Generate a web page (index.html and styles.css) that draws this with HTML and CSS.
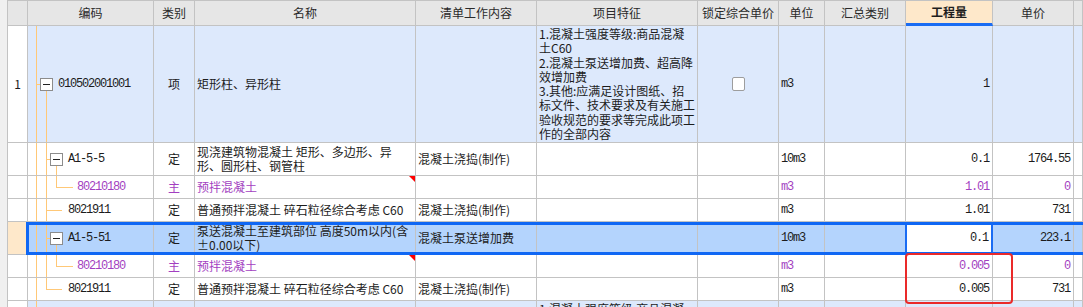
FILE: index.html
```html
<!DOCTYPE html>
<html lang="zh">
<head>
<meta charset="utf-8">
<title>清单</title>
<link rel="stylesheet" href="styles.css">
</head>
<body>
<div class="page">
  <div class="table">
    <div class="row head">
      <div class="c"></div>
      <div class="c ctr">编码</div>
      <div class="c ctr">类别</div>
      <div class="c ctr">名称</div>
      <div class="c ctr">清单工作内容</div>
      <div class="c ctr">项目特征</div>
      <div class="c ctr">锁定综合单价</div>
      <div class="c ctr">单位</div>
      <div class="c ctr">汇总类别</div>
      <div class="c ctr qty-head">工程量</div>
      <div class="c ctr">单价</div>
      <div class="c"></div>
    </div>

    <div class="row blue h117">
      <div class="c ctr rn">1</div>
      <div class="c code">
        <span class="ln v1"></span><span class="ln h hroot"></span><span class="ln v2 from-box"></span>
        <span class="box lv1"></span><span class="mono">010502001001</span>
      </div>
      <div class="c ctr">项</div>
      <div class="c">矩形柱、异形柱</div>
      <div class="c"></div>
      <div class="c feat">1.混凝土强度等级:商品混凝<br>土C60<br>2.混凝土泵送增加费、超高降<br>效增加费<br>3.其他:应满足设计图纸、招<br>标文件、技术要求及有关施工<br>验收规范的要求等完成此项工<br>作的全部内容</div>
      <div class="c ctr"><span class="chk"></span></div>
      <div class="c"><span class="mono">m3</span></div>
      <div class="c"></div>
      <div class="c num"><span class="mono">1</span></div>
      <div class="c"></div>
      <div class="c"></div>
    </div>

    <div class="row h33">
      <div class="c rn"></div>
      <div class="c code">
        <span class="ln v1"></span><span class="ln v2"></span><span class="ln h h2box"></span><span class="ln v3 from-box"></span>
        <span class="box lv2"></span><span class="mono">A1-5-5</span>
      </div>
      <div class="c ctr">定</div>
      <div class="c wrap">现浇建筑物混凝土 矩形、多边形、异<br>形、圆形柱、钢管柱</div>
      <div class="c">混凝土浇捣(制作)</div>
      <div class="c"></div>
      <div class="c"></div>
      <div class="c"><span class="mono">10m3</span></div>
      <div class="c"></div>
      <div class="c num"><span class="mono">0.1</span></div>
      <div class="c num"><span class="mono">1764.55</span></div>
      <div class="c"></div>
    </div>

    <div class="row h23 purple">
      <div class="c rn"></div>
      <div class="c code">
        <span class="ln v1"></span><span class="ln v2"></span><span class="ln v3 to-mid"></span><span class="ln h h3leaf"></span>
        <span class="mono lv3t">80210180</span>
      </div>
      <div class="c ctr">主</div>
      <div class="c flag">预拌混凝土</div>
      <div class="c"></div>
      <div class="c"></div>
      <div class="c"></div>
      <div class="c"><span class="mono">m3</span></div>
      <div class="c"></div>
      <div class="c num"><span class="mono">1.01</span></div>
      <div class="c num"><span class="mono">0</span></div>
      <div class="c"></div>
    </div>

    <div class="row h23">
      <div class="c rn"></div>
      <div class="c code">
        <span class="ln v1"></span><span class="ln v2"></span><span class="ln h h2leaf"></span>
        <span class="mono lv2t">8021911</span>
      </div>
      <div class="c ctr">定</div>
      <div class="c">普通预拌混凝土 碎石粒径综合考虑 C60</div>
      <div class="c">混凝土浇捣(制作)</div>
      <div class="c"></div>
      <div class="c"></div>
      <div class="c"><span class="mono">m3</span></div>
      <div class="c"></div>
      <div class="c num"><span class="mono">1.01</span></div>
      <div class="c num"><span class="mono">731</span></div>
      <div class="c"></div>
    </div>

    <div class="row h33 sel">
      <div class="c rn"></div>
      <div class="c code">
        <span class="ln v1"></span><span class="ln v2"></span><span class="ln h h2box"></span><span class="ln v3 from-box"></span>
        <span class="box lv2"></span><span class="mono">A1-5-51</span>
      </div>
      <div class="c ctr">定</div>
      <div class="c wrap">泵送混凝土至建筑部位 高度50m以内(含<br>±0.00以下)</div>
      <div class="c">混凝土泵送增加费</div>
      <div class="c"></div>
      <div class="c"></div>
      <div class="c"><span class="mono">10m3</span></div>
      <div class="c"></div>
      <div class="c num edit"><span class="mono">0.1</span></div>
      <div class="c num"><span class="mono">223.1</span></div>
      <div class="c"></div>
    </div>

    <div class="row h23 purple">
      <div class="c rn"></div>
      <div class="c code">
        <span class="ln v1"></span><span class="ln v2"></span><span class="ln v3 to-mid"></span><span class="ln h h3leaf"></span>
        <span class="mono lv3t">80210180</span>
      </div>
      <div class="c ctr">主</div>
      <div class="c flag">预拌混凝土</div>
      <div class="c"></div>
      <div class="c"></div>
      <div class="c"></div>
      <div class="c"><span class="mono">m3</span></div>
      <div class="c"></div>
      <div class="c num"><span class="mono">0.005</span></div>
      <div class="c num"><span class="mono">0</span></div>
      <div class="c"></div>
    </div>

    <div class="row h23">
      <div class="c rn"></div>
      <div class="c code">
        <span class="ln v1"></span><span class="ln v2 to-mid"></span><span class="ln h h2leaf"></span>
        <span class="mono lv2t">8021911</span>
      </div>
      <div class="c ctr">定</div>
      <div class="c">普通预拌混凝土 碎石粒径综合考虑 C60</div>
      <div class="c">混凝土浇捣(制作)</div>
      <div class="c"></div>
      <div class="c"></div>
      <div class="c"><span class="mono">m3</span></div>
      <div class="c"></div>
      <div class="c num"><span class="mono">0.005</span></div>
      <div class="c num"><span class="mono">731</span></div>
      <div class="c"></div>
    </div>

    <div class="row blue h60">
      <div class="c rn"></div>
      <div class="c code"><span class="ln v1"></span></div>
      <div class="c"></div>
      <div class="c"></div>
      <div class="c"></div>
      <div class="c feat">1.混凝土强度等级:商品混凝<br>土C60</div>
      <div class="c"></div>
      <div class="c"></div>
      <div class="c"></div>
      <div class="c"></div>
      <div class="c"></div>
      <div class="c"></div>
    </div>
  </div>
  <div class="mark"></div>
</div>
</body>
</html>
```

FILE: styles.css
```css
* { box-sizing: border-box; }
html, body { margin: 0; padding: 0; }
body {
  width: 1083px;
  height: 307px;
  overflow: hidden;
  background: #f0f0f0;
  font-family: "Noto Sans CJK SC", "Liberation Sans", sans-serif;
  font-size: 12px;
  color: #1c1c1c;
}
.page { position: relative; width: 1083px; height: 307px; }
.table {
  margin-left: 7px;
  border-left: 1px solid #c3c3c3;
  background: #fff;
}
.row {
  display: grid;
  grid-template-columns: 20px 126px 41px 221px 121px 161px 81px 46px 81px 87px 81px 1fr;
  height: 23px;
}
.row.head {
  height: 26px;
  border-top: 1px solid #c3c3c3;
  background: #e6e6e6;
  color: #2a2a2a;
}
.h117 { height: 117px; }
.h33 { height: 33px; }
.h23 { height: 23px; }
.h60 { height: 60px; }

.c {
  border-right: 1px solid #c3c3c3;
  border-bottom: 1px solid #c3c3c3;
  display: flex;
  align-items: center;
  padding: 0 2px;
  white-space: nowrap;
  overflow: hidden;
  position: relative;
  line-height: 14px;
}
.ctr { justify-content: center; }
.num { justify-content: flex-end; padding-right: 3px; }
.wrap { line-height: 14px; }
.feat {
  align-items: flex-start;
  line-height: 14.3px;
  padding-top: 1px;
  overflow: hidden;
}
.mono {
  font-family: "Liberation Mono", "DejaVu Sans Mono", monospace;
  letter-spacing: -1.2px;
  font-size: 12px;
}

.blue .c { background: #dde9fc; }
.blue .c.rn { background: #fff; }
.purple .c { color: #a33fc1; }

.qty-head {
  background: #fee8ca;
  font-weight: bold;
  border-bottom: 3px solid #1a6cf3;
  color: #1e1e1e;
}

/* selected row */
.sel .c { background: #b4d4fd; }
.sel .c.rn { background: #fee8ca; }
.sel .c.edit {
  background: #fff;
  border-left: 2px solid #1a6cf3;
  border-right: 2px solid #1a6cf3;
  margin-left: -1px;
}
.sel { position: relative; }
.sel::after {
  content: "";
  position: absolute;
  left: 18px;
  top: 0;
  right: -4px;
  bottom: 0;
  border: 3px solid #0f67f4;
  pointer-events: none;
}

/* tree */
.code { padding-left: 0; }
.ln { position: absolute; background: #ffc877; }
.v1 { left: 8px; width: 1px; top: 0; bottom: -1px; }
.v2 { left: 18px; width: 1px; top: 0; bottom: -1px; }
.v3 { left: 28px; width: 1px; top: 0; bottom: -1px; }
.from-box { top: calc(50% + 6px); }
.to-mid { bottom: 50%; }
.h { height: 1px; top: 50%; }
.hroot { left: 8px; width: 4px; }
.h2box { left: 18px; width: 4px; }
.h2leaf { left: 18px; width: 16px; }
.h3leaf { left: 28px; width: 17px; }

.box {
  position: relative;
  width: 13px;
  height: 13px;
  border: 1px solid #8c8c8c;
  background: #fff;
  margin-right: 5px;
  flex: none;
}
.box::after {
  content: "";
  position: absolute;
  left: 2px;
  right: 2px;
  top: 5px;
  height: 1px;
  background: #222;
}
.box.lv1 { margin-left: 12px; }
.box.lv2 { margin-left: 22px; }
.lv2t { margin-left: 40px; }
.lv3t { margin-left: 49px; }

.chk {
  width: 13px;
  height: 14px;
  background: #fff;
  border: 1px solid #9d9d9d;
  border-radius: 2px;
}

.flag::after {
  content: "";
  position: absolute;
  top: 0;
  right: 0;
  border-top: 6px solid #f00;
  border-left: 6px solid transparent;
}

.mark {
  position: absolute;
  left: 905px;
  top: 253px;
  width: 108px;
  height: 51px;
  border: 2px solid #ea2a2a;
  border-radius: 4px;
  pointer-events: none;
}
```
